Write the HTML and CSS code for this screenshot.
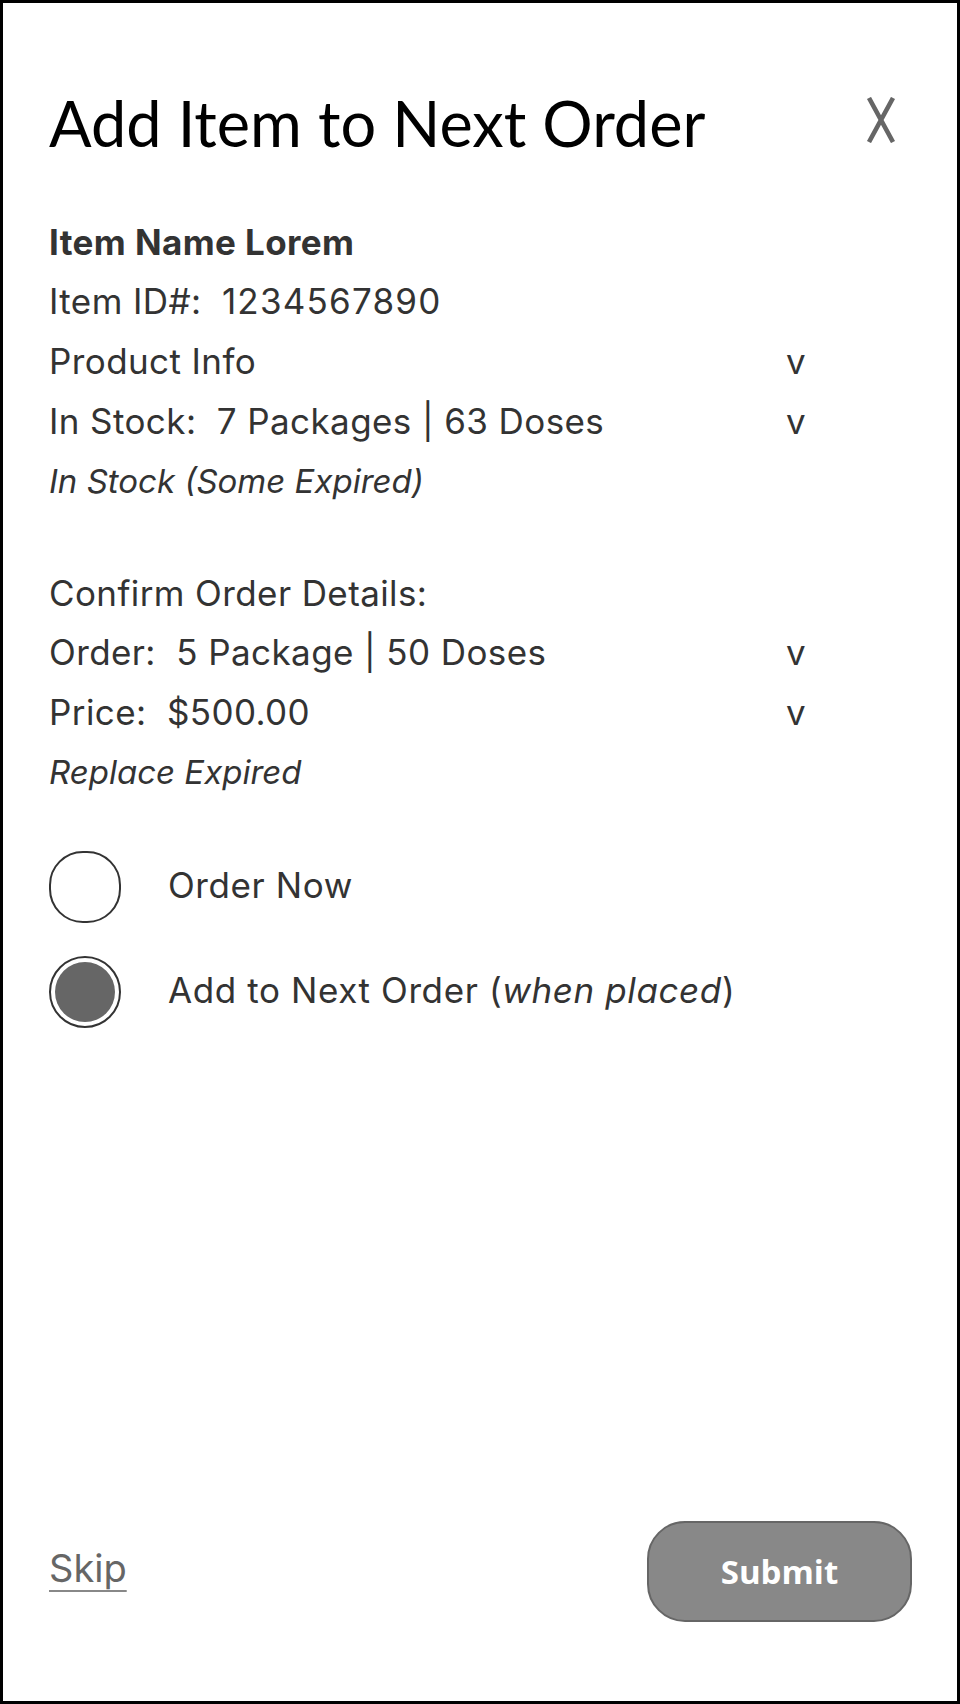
FILE: index.html
```html
<!DOCTYPE html>
<html>
    <head>
        <meta name="viewport" content="width=device-width, initial-scale=1.0">
        <title>Add Item to Next Order</title>
        <link rel="stylesheet" href="styles.css">
    </head>
    <body>
        <div class="sheet">
            <div class="head">
                <h1>Add Item to Next Order</h1>
                <button class="close" aria-label="Close">
                    <svg width="30" height="46" viewBox="0 0 30 46">
                        <path d="M3 1 L27 45 M27 1 L3 45" stroke="#666" stroke-width="4.6" fill="none"/>
                    </svg>
                </button>
            </div>

            <div class="block item">
                <p class="name">Item Name Lorem</p>
                <p>Item ID#:&nbsp; <span class="num">1234567890</span></p>
                <div class="row"><span>Product Info</span><span class="caret">v</span></div>
                <div class="row"><span>In Stock:&nbsp; 7 Packages | 63 Doses</span><span class="caret">v</span></div>
                <p class="note">In Stock (Some Expired)</p>
            </div>

            <div class="block confirm">
                <p>Confirm Order Details:</p>
                <div class="row"><span>Order:&nbsp; 5 Package | 50 Doses</span><span class="caret">v</span></div>
                <div class="row"><span>Price:&nbsp; $500.00</span><span class="caret">v</span></div>
                <p class="note">Replace Expired</p>
            </div>

            <div class="choices">
                <label class="choice">
                    <span class="radio"></span>
                    <span class="label">Order Now</span>
                </label>
                <label class="choice">
                    <span class="radio checked"><span class="dot"></span></span>
                    <span class="label">Add to Next Order (<em>when placed</em>)</span>
                </label>
            </div>

            <div class="actions">
                <a class="skip" href="#">Skip</a>
                <button class="submit">Submit</button>
            </div>
        </div>
    </body>
</html>
```

FILE: styles.css
```css
*{
    padding: 0;
    margin: 0;
    box-sizing: border-box;
}
html { background: #fff; }
body { margin: 0; }

.sheet{
    height: 1704px;
    border: 3px solid #000;
    padding: 82px 45px 79px 46px;
    display: flex;
    flex-direction: column;
    font-family: Inter, "Liberation Sans", sans-serif;
    font-size: 35px;
    letter-spacing: 0.4px;
    color: #333;
}

.head{
    display: flex;
    justify-content: space-between;
    align-items: flex-start;
    letter-spacing: 0;
}
.head h1{
    font-family: Lato, "Liberation Sans", sans-serif;
    font-weight: 400;
    font-size: 63px;
    line-height: 1.2;
    color: #000;
}
.close{
    border: none;
    background: none;
    margin: 12px 16px 0 0;
    display: block;
}
.close svg{ display: block; }

.block{
    line-height: 59.8px;
}
.item{ margin-top: 52px; }
.confirm{ margin-top: 52px; }
.name{ font-weight: 700; }
.num{ letter-spacing: 1.2px; }
.note{
    font-style: italic;
    font-size: 33px;
    letter-spacing: 0;
}
.row{
    width: 757px;
    display: flex;
    justify-content: space-between;
}

.choices{
    margin-top: 48px;
    display: flex;
    flex-direction: column;
    gap: 33px;
}
.choice{
    display: flex;
    align-items: center;
    gap: 47px;
    letter-spacing: 0.6px;
}
.label{ margin-bottom: 4px; }
.radio{
    width: 72px;
    height: 72px;
    border: 2.5px solid #333;
    border-radius: 34px;
    display: flex;
    align-items: center;
    justify-content: center;
    flex-shrink: 0;
}
.radio.checked{
    border-radius: 50%;
}
.dot{
    width: 60px;
    height: 60px;
    border-radius: 50%;
    background: #666;
}

.actions{
    margin-top: auto;
    display: flex;
    justify-content: space-between;
    align-items: center;
    letter-spacing: 0;
}
.skip{
    font-size: 38px;
    color: #666;
    text-decoration: underline;
    text-decoration-color: #888;
    text-decoration-thickness: 2px;
    text-underline-offset: 8px;
    margin-bottom: 8px;
}
.submit{
    width: 265px;
    height: 101px;
    border: 2px solid #666;
    border-radius: 38px;
    background: #888;
    color: #fff;
    font-family: "Open Sans", "Liberation Sans", sans-serif;
    font-weight: 700;
    font-size: 33px;
}
```
